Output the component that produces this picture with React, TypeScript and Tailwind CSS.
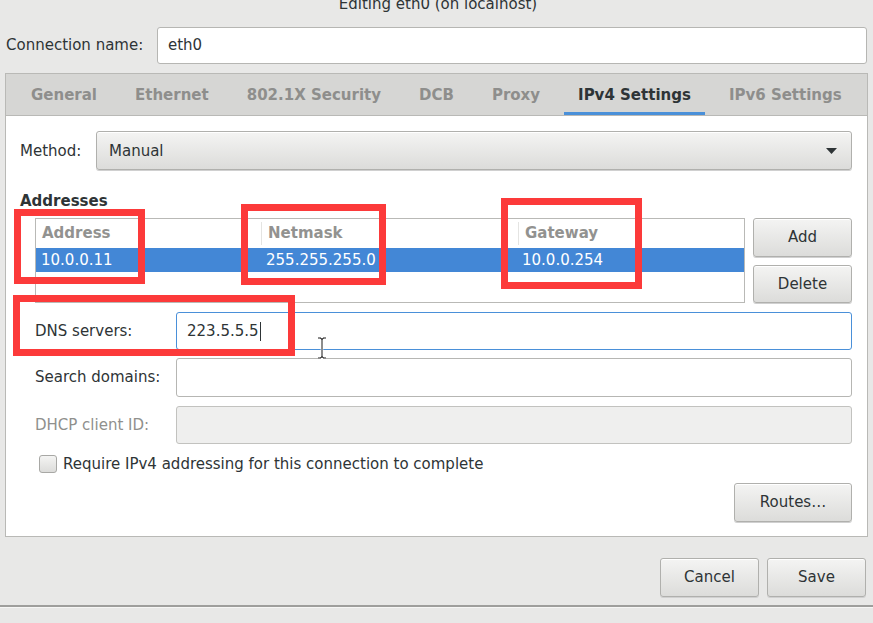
import React from "react";

const btn =
  "flex items-center justify-center rounded-[3px] border border-[#b0b0ad] bg-gradient-to-b from-[#f4f4f3] to-[#dcdcda] shadow-[inset_0_1px_0_#ffffff,0_1px_0_#d0d0d0] text-[#2e3436]";

const tabs = [
  "General",
  "Ethernet",
  "802.1X Security",
  "DCB",
  "Proxy",
  "IPv4 Settings",
  "IPv6 Settings",
];

export default function App() {
  return (
    <div
      className="relative w-[873px] h-[623px] overflow-hidden bg-[#e8e8e7] text-[15px] text-[#2e3436] flex flex-col"
      style={{ fontFamily: '"DejaVu Sans", "Liberation Sans", sans-serif' }}
    >
      {/* title */}
      <div className="h-[27px] flex justify-center shrink-0">
        <div className="-mt-[5px] leading-[18px] pl-[3px]">Editing eth0 (on localhost)</div>
      </div>

      {/* connection name */}
      <div className="flex items-center h-[37px] shrink-0 pl-[6px] pr-[6px]">
        <div className="w-[151px]">Connection name:</div>
        <div className="flex-1 h-full rounded-[3px] border border-[#b6b6b3] bg-white flex items-center pl-[10px]">
          eth0
        </div>
      </div>

      {/* notebook */}
      <div className="mt-[9px] ml-[5px] w-[863px] flex flex-col shrink-0">
        <div className="h-[43px] border border-[#b9b9b6] bg-[#d6d6d4] flex pl-[6px]">
          {tabs.map((t) => {
            const active = t === "IPv4 Settings";
            return (
              <div key={t} className="flex flex-col h-full">
                <div
                  className={
                    "flex-1 flex items-center px-[19px] font-bold pt-[4px] " +
                    (active ? "text-[#2e3436]" : "text-[#8e8e8c]")
                  }
                >
                  {t}
                </div>
                <div className={"h-[3px] mx-[5px] " + (active ? "bg-[#4a90d9]" : "bg-transparent")} />
              </div>
            );
          })}
        </div>

        <div className="h-[421px] border border-t-0 border-[#b9b9b6] bg-white pl-[14px] pr-[15px] pt-[15px] flex flex-col">
          {/* method */}
          <div className="flex items-center h-[39px]">
            <div className="w-[76px] pt-[1px]">Method:</div>
            <div className={btn + " flex-1 h-full !justify-between pl-[12px] pr-[14px]"}>
              <span className="pt-[1px]">Manual</span>
              <svg width="11" height="6" viewBox="0 0 11 6">
                <polygon points="0,0 11,0 5.5,6" fill="#2e3436" />
              </svg>
            </div>
          </div>

          <div className="mt-[22px] leading-[18px] font-bold">Addresses</div>

          {/* table and buttons */}
          <div className="mt-[8px] flex pl-[15px] h-[85px]">
            <div className="w-[710px] h-full border border-[#b9b9b6] bg-white flex flex-col">
              <div className="h-[29px] flex font-bold text-[#929290]">
                <div className="w-[225px] flex items-center pl-[6px]">Address</div>
                <div className="w-[257px] flex items-center pl-[6px] border-l border-[#e4e4e2] my-[3px]">Netmask</div>
                <div className="flex-1 flex items-center pl-[6px] border-l border-[#e4e4e2] my-[3px]">Gateway</div>
              </div>
              <div className="h-[24px] flex bg-[#4387d6] text-white">
                <div className="w-[225px] flex items-center pl-[5px]">10.0.0.11</div>
                <div className="w-[257px] flex items-center pl-[5px]">255.255.255.0</div>
                <div className="flex-1 flex items-center pl-[4px]">10.0.0.254</div>
              </div>
            </div>
            <div className="ml-[8px] flex-1 flex flex-col gap-[8px]">
              <div className={btn + " h-[39px]"}>Add</div>
              <div className={btn + " h-[39px]"}>Delete</div>
            </div>
          </div>

          {/* DNS */}
          <div className="mt-[9px] flex items-center h-[38px] pl-[15px]">
            <div className="w-[141px]">DNS servers:</div>
            <div className="flex-1 h-full rounded-[3px] border border-[#4a90d9] bg-white flex items-center pl-[10px]">
              <span>223.5.5.5</span>
              <span className="w-[1px] h-[19px] bg-[#2e3436] ml-[1px]" />
            </div>
          </div>

          <div className="mt-[8px] flex items-center h-[39px] pl-[15px]">
            <div className="w-[141px]">Search domains:</div>
            <div className="flex-1 h-full rounded-[3px] border border-[#b6b6b3] bg-white" />
          </div>

          <div className="mt-[9px] flex items-center h-[38px] pl-[15px]">
            <div className="w-[141px] text-[#8f908d]">DHCP client ID:</div>
            <div className="flex-1 h-full rounded-[3px] border border-[#c2c2bf] bg-[#efefee]" />
          </div>

          <div className="mt-[11px] flex items-center h-[18px] pl-[19px]">
            <div className="w-[18px] h-[18px] rounded-[3px] border border-[#a8a8a5] bg-gradient-to-b from-[#f4f4f3] to-[#dcdcda]" />
            <div className="ml-[6px]">Require IPv4 addressing for this connection to complete</div>
          </div>

          <div className="mt-[10px] flex justify-end">
            <div className={btn + " w-[118px] h-[39px]"}>Routes…</div>
          </div>
        </div>
      </div>

      {/* bottom buttons */}
      <div className="mt-[21px] flex justify-end pr-[7px] gap-[8px] shrink-0">
        <div className={btn + " w-[99px] h-[39px]"}>Cancel</div>
        <div className={btn + " w-[99px] h-[39px]"}>Save</div>
      </div>

      <div className="mt-[8px] h-[2px] bg-[#9e9e9c] shrink-0" />
      <div className="h-[1px] bg-[#f6f6f5] shrink-0" />

      {/* I-beam cursor */}
      <svg className="absolute left-[317px] top-[337px]" width="10" height="22" viewBox="0 0 10 22">
        <path d="M1 1h3v1h2V1h3M5 2v18M1 21h3v-1h2v1h3" stroke="#ffffff" strokeWidth="2.5" fill="none" />
        <path d="M1 1h3v1h2V1h3M5 2v18M1 21h3v-1h2v1h3" stroke="#1a1a1a" strokeWidth="1" fill="none" />
      </svg>

      {/* red annotation boxes */}
      <div className="absolute left-[14px] top-[209px] w-[131px] h-[75px] border-[7px] border-[#fc3a3a]" />
      <div className="absolute left-[241px] top-[204px] w-[145px] h-[81px] border-[7px] border-[#fc3a3a]" />
      <div className="absolute left-[501px] top-[198px] w-[141px] h-[91px] border-[7px] border-[#fc3a3a]" />
      <div className="absolute left-[13px] top-[295px] w-[282px] h-[61px] border-[7px] border-[#fc3a3a]" />
    </div>
  );
}
